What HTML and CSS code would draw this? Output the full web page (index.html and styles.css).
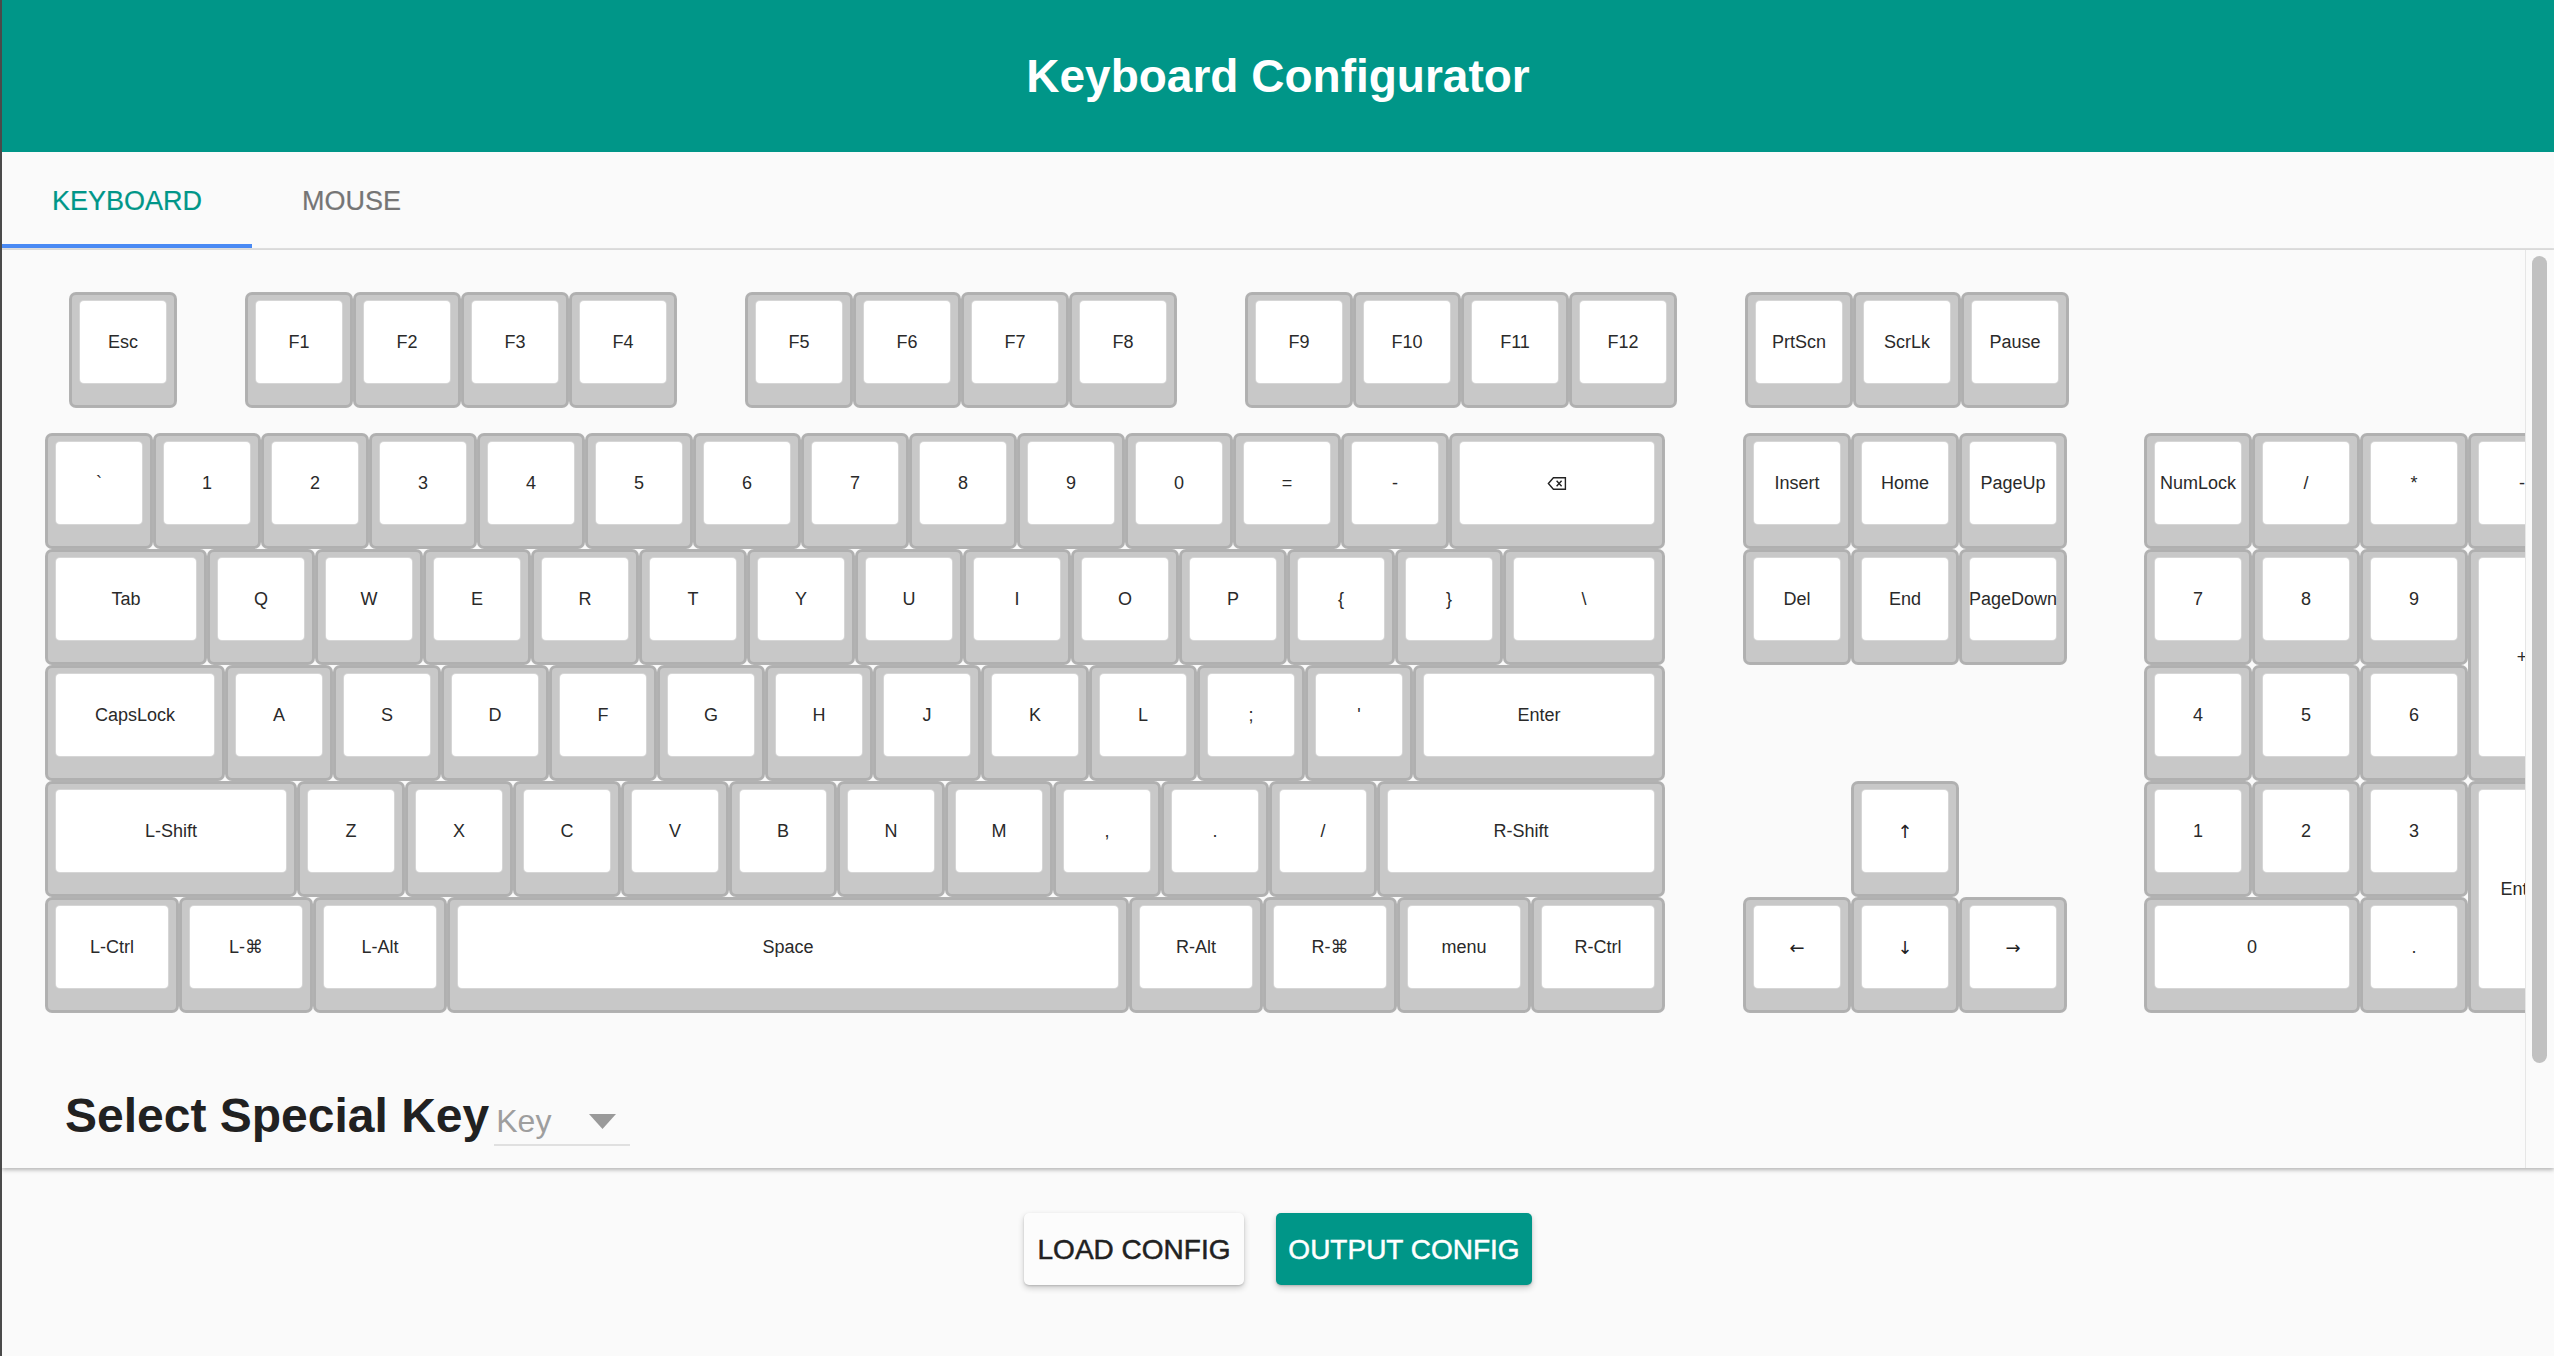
FILE: index.html
```html
<!DOCTYPE html>
<html lang="en">
<head>
<meta charset="utf-8">
<title>Keyboard Configurator</title>
<link rel="stylesheet" href="styles.css">
</head>
<body>
<header class="appbar"><h1 class="title">Keyboard Configurator</h1></header>
<nav class="tabs">
  <div class="tab active">Keyboard</div>
  <div class="tab">Mouse</div>
</nav>
<main class="panel">
  <div class="content">
    <div class="keyboard">
      <div class="frow">
        <div class="group">
          <div class="key"><div class="cap">Esc</div></div>
        </div>
        <div class="group">
          <div class="key"><div class="cap">F1</div></div>
          <div class="key"><div class="cap">F2</div></div>
          <div class="key"><div class="cap">F3</div></div>
          <div class="key"><div class="cap">F4</div></div>
        </div>
        <div class="group">
          <div class="key"><div class="cap">F5</div></div>
          <div class="key"><div class="cap">F6</div></div>
          <div class="key"><div class="cap">F7</div></div>
          <div class="key"><div class="cap">F8</div></div>
        </div>
        <div class="group">
          <div class="key"><div class="cap">F9</div></div>
          <div class="key"><div class="cap">F10</div></div>
          <div class="key"><div class="cap">F11</div></div>
          <div class="key"><div class="cap">F12</div></div>
        </div>
        <div class="group">
          <div class="key"><div class="cap">PrtScn</div></div>
          <div class="key"><div class="cap">ScrLk</div></div>
          <div class="key"><div class="cap">Pause</div></div>
        </div>
      </div>

      <div class="blocks">
        <div class="main">
          <div class="row">
            <div class="key"><div class="cap">`</div></div>
            <div class="key"><div class="cap">1</div></div>
            <div class="key"><div class="cap">2</div></div>
            <div class="key"><div class="cap">3</div></div>
            <div class="key"><div class="cap">4</div></div>
            <div class="key"><div class="cap">5</div></div>
            <div class="key"><div class="cap">6</div></div>
            <div class="key"><div class="cap">7</div></div>
            <div class="key"><div class="cap">8</div></div>
            <div class="key"><div class="cap">9</div></div>
            <div class="key"><div class="cap">0</div></div>
            <div class="key"><div class="cap">=</div></div>
            <div class="key"><div class="cap">-</div></div>
            <div class="key k2"><div class="cap">
              <svg class="bksp" width="20" height="15" viewBox="0 0 20 15" aria-label="Backspace"><path d="M1.4 7.5 L6.4 1.8 H18.4 V13.2 H6.4 Z" fill="none" stroke="#222" stroke-width="1.4" stroke-linejoin="miter"/><path d="M9.6 4.8 L14.6 10.2 M14.6 4.8 L9.6 10.2" stroke="#222" stroke-width="1.4" fill="none"/></svg>
            </div></div>
          </div>
          <div class="row">
            <div class="key k15"><div class="cap">Tab</div></div>
            <div class="key"><div class="cap">Q</div></div>
            <div class="key"><div class="cap">W</div></div>
            <div class="key"><div class="cap">E</div></div>
            <div class="key"><div class="cap">R</div></div>
            <div class="key"><div class="cap">T</div></div>
            <div class="key"><div class="cap">Y</div></div>
            <div class="key"><div class="cap">U</div></div>
            <div class="key"><div class="cap">I</div></div>
            <div class="key"><div class="cap">O</div></div>
            <div class="key"><div class="cap">P</div></div>
            <div class="key"><div class="cap">{</div></div>
            <div class="key"><div class="cap">}</div></div>
            <div class="key k15"><div class="cap">\</div></div>
          </div>
          <div class="row">
            <div class="key kcaps"><div class="cap">CapsLock</div></div>
            <div class="key"><div class="cap">A</div></div>
            <div class="key"><div class="cap">S</div></div>
            <div class="key"><div class="cap">D</div></div>
            <div class="key"><div class="cap">F</div></div>
            <div class="key"><div class="cap">G</div></div>
            <div class="key"><div class="cap">H</div></div>
            <div class="key"><div class="cap">J</div></div>
            <div class="key"><div class="cap">K</div></div>
            <div class="key"><div class="cap">L</div></div>
            <div class="key"><div class="cap">;</div></div>
            <div class="key"><div class="cap">'</div></div>
            <div class="key k233"><div class="cap">Enter</div></div>
          </div>
          <div class="row">
            <div class="key k233"><div class="cap">L-Shift</div></div>
            <div class="key"><div class="cap">Z</div></div>
            <div class="key"><div class="cap">X</div></div>
            <div class="key"><div class="cap">C</div></div>
            <div class="key"><div class="cap">V</div></div>
            <div class="key"><div class="cap">B</div></div>
            <div class="key"><div class="cap">N</div></div>
            <div class="key"><div class="cap">M</div></div>
            <div class="key"><div class="cap">,</div></div>
            <div class="key"><div class="cap">.</div></div>
            <div class="key"><div class="cap">/</div></div>
            <div class="key k267"><div class="cap">R-Shift</div></div>
          </div>
          <div class="row">
            <div class="key kmod"><div class="cap">L-Ctrl</div></div>
            <div class="key kmod"><div class="cap">L-⌘</div></div>
            <div class="key kmod"><div class="cap">L-Alt</div></div>
            <div class="key kspace"><div class="cap">Space</div></div>
            <div class="key kmod"><div class="cap">R-Alt</div></div>
            <div class="key kmod"><div class="cap">R-⌘</div></div>
            <div class="key kmod"><div class="cap">menu</div></div>
            <div class="key kmod"><div class="cap">R-Ctrl</div></div>
          </div>
        </div>

        <div class="nav">
          <div class="row">
            <div class="key"><div class="cap">Insert</div></div>
            <div class="key"><div class="cap">Home</div></div>
            <div class="key"><div class="cap">PageUp</div></div>
          </div>
          <div class="row">
            <div class="key"><div class="cap">Del</div></div>
            <div class="key"><div class="cap">End</div></div>
            <div class="key"><div class="cap">PageDown</div></div>
          </div>
          <div class="row empty"></div>
          <div class="row">
            <div class="spacer"></div>
            <div class="key"><div class="cap arrow">↑</div></div>
          </div>
          <div class="row">
            <div class="key"><div class="cap arrow">←</div></div>
            <div class="key"><div class="cap arrow">↓</div></div>
            <div class="key"><div class="cap arrow">→</div></div>
          </div>
        </div>

        <div class="numpad">
          <div class="key"><div class="cap">NumLock</div></div>
          <div class="key"><div class="cap">/</div></div>
          <div class="key"><div class="cap">*</div></div>
          <div class="key"><div class="cap">-</div></div>
          <div class="key"><div class="cap">7</div></div>
          <div class="key"><div class="cap">8</div></div>
          <div class="key"><div class="cap">9</div></div>
          <div class="key tall"><div class="cap">+</div></div>
          <div class="key"><div class="cap">4</div></div>
          <div class="key"><div class="cap">5</div></div>
          <div class="key"><div class="cap">6</div></div>
          <div class="key"><div class="cap">1</div></div>
          <div class="key"><div class="cap">2</div></div>
          <div class="key"><div class="cap">3</div></div>
          <div class="key tall"><div class="cap">Enter</div></div>
          <div class="key wide"><div class="cap">0</div></div>
          <div class="key"><div class="cap">.</div></div>
        </div>
      </div>
    </div>

    <div class="special">
      <h2 class="special-title">Select Special Key</h2>
      <div class="select">
        <span class="select-value">Key</span>
        <svg class="select-arrow" width="27" height="15" viewBox="0 0 27 15"><path d="M0 0 H27 L13.5 15 Z" fill="#9a9a9a"/></svg>
      </div>
    </div>
  </div>
  <div class="scrollbar"><div class="thumb"></div></div>
</main>
<div class="actions">
  <button class="btn btn-load">Load Config</button>
  <button class="btn btn-output">Output Config</button>
</div>
</body>
</html>
```

FILE: styles.css
```css
* {
  box-sizing: border-box;
}

html,
body {
  margin: 0;
}

body {
  height: 1356px;
  overflow: hidden;
  background: #fafafa;
  border-left: 2px solid #4a4a4a;
  font-family: "Liberation Sans", "DejaVu Sans", Arial, sans-serif;
}

/* App bar */
.appbar {
  height: 152px;
  background: #009688;
  display: flex;
  align-items: center;
  justify-content: center;
}

.title {
  margin: 0;
  color: #ffffff;
  font-size: 46px;
  font-weight: 700;
  line-height: 1;
}

/* Tabs */
.tabs {
  display: flex;
  height: 98px;
  border-bottom: 2px solid #e0e0e0;
  background: #fafafa;
}

.tab {
  height: 96px;
  padding: 2px 50px 0;
  display: flex;
  align-items: center;
  font-size: 27px;
  text-transform: uppercase;
  color: #757575;
  -webkit-text-stroke: 0.2px currentColor;
}

.tab.active {
  color: #009688;
  box-shadow: inset 0 -4px 0 #4a8af4;
}

/* Panel */
.panel {
  position: relative;
  height: 918px;
  overflow: hidden;
  background: #fafafa;
  box-shadow: 0 2px 4px rgba(0, 0, 0, 0.28);
}

.content {
  padding: 42px 0 0 43px;
}

.keyboard {
  width: max-content;
}

.frow {
  display: flex;
  gap: 68px;
  padding-left: 24px;
}

.group {
  display: flex;
}

.blocks {
  display: flex;
  align-items: flex-start;
  margin-top: 25px;
}

.main {
  flex: none;
  width: 1620px;
  margin-right: 78px;
}

.row {
  display: flex;
}

.nav {
  flex: none;
  width: 324px;
  margin-right: 77px;
}

.row.empty {
  height: 116px;
}

.spacer {
  flex: none;
  width: 108px;
}

.numpad {
  flex: none;
  display: grid;
  grid-template-columns: repeat(4, 108px);
  grid-template-rows: repeat(5, 116px);
}

/* Keys */
.key {
  flex: none;
  margin: 1px;
  width: 106px;
  height: 114px;
  background: #c8c8c8;
  border: 2px solid #b0b0b0;
  border-radius: 6px;
  box-shadow: 0 0 0 1px #b2b2b2;
  padding: 6px 8px 22px;
  display: flex;
}

.cap {
  flex: 1;
  min-width: 0;
  background: #ffffff;
  border-radius: 4px;
  box-shadow: 0 0 0 1px #d6d6d6;
  display: flex;
  align-items: center;
  justify-content: center;
  font-size: 18px;
  color: #2a2a2a;
  white-space: nowrap;
}

.cap.arrow {
  font-family: "DejaVu Sans", sans-serif;
  font-size: 18px;
  color: #222222;
}

.k15 { width: 160px; }
.kcaps { width: 178px; }
.k2 { width: 214px; }
.k233 { width: 250px; }
.k267 { width: 286px; }
.kmod { width: 132px; }
.kspace { width: 680px; }

.numpad .key {
  width: auto;
  height: auto;
}

.numpad .tall {
  grid-row: span 2;
}

.numpad .wide {
  grid-column: span 2;
}

.bksp {
  display: block;
}

/* Special key select */
.special {
  display: flex;
  align-items: baseline;
  margin: 75px 0 0 20px;
}

.special-title {
  margin: 0;
  font-size: 48px;
  font-weight: 700;
  line-height: 56px;
  color: #212121;
}

.select {
  margin-left: 5px;
  width: 136px;
  display: flex;
  align-items: baseline;
  padding: 0 0 3px 2px;
  border-bottom: 2px solid #e0e0e0;
}

.select-value {
  font-size: 32px;
  line-height: 40px;
  color: #9e9e9e;
}

.select-arrow {
  display: block;
  align-self: flex-end;
  margin: 0 14px 12px auto;
}

/* Fake overlay scrollbar */
.scrollbar {
  position: absolute;
  top: 0;
  right: 0;
  bottom: 0;
  width: 29px;
  background: #fafafa;
  border-left: 1px solid #e6e6e6;
  padding: 6px 0 0 6px;
}

.thumb {
  width: 15px;
  height: 807px;
  border-radius: 8px;
  background: #c1c1c1;
}

/* Actions */
.actions {
  display: flex;
  justify-content: center;
  gap: 32px;
  padding-top: 45px;
}

.btn {
  height: 72px;
  padding: 2px 0 0;
  border: 0;
  border-radius: 5px;
  font-family: "Liberation Sans", Arial, sans-serif;
  font-size: 28px;
  text-transform: uppercase;
  -webkit-text-stroke: 0.5px currentColor;
  cursor: pointer;
}

.btn-load {
  width: 220px;
  background: #fcfcfc;
  color: #212121;
  box-shadow: 0 3px 6px rgba(0, 0, 0, 0.2), 0 1px 2px rgba(0, 0, 0, 0.14);
}

.btn-output {
  width: 256px;
  background: #009688;
  color: #ffffff;
  box-shadow: 0 3px 6px rgba(0, 0, 0, 0.2), 0 1px 2px rgba(0, 0, 0, 0.14);
}
```
